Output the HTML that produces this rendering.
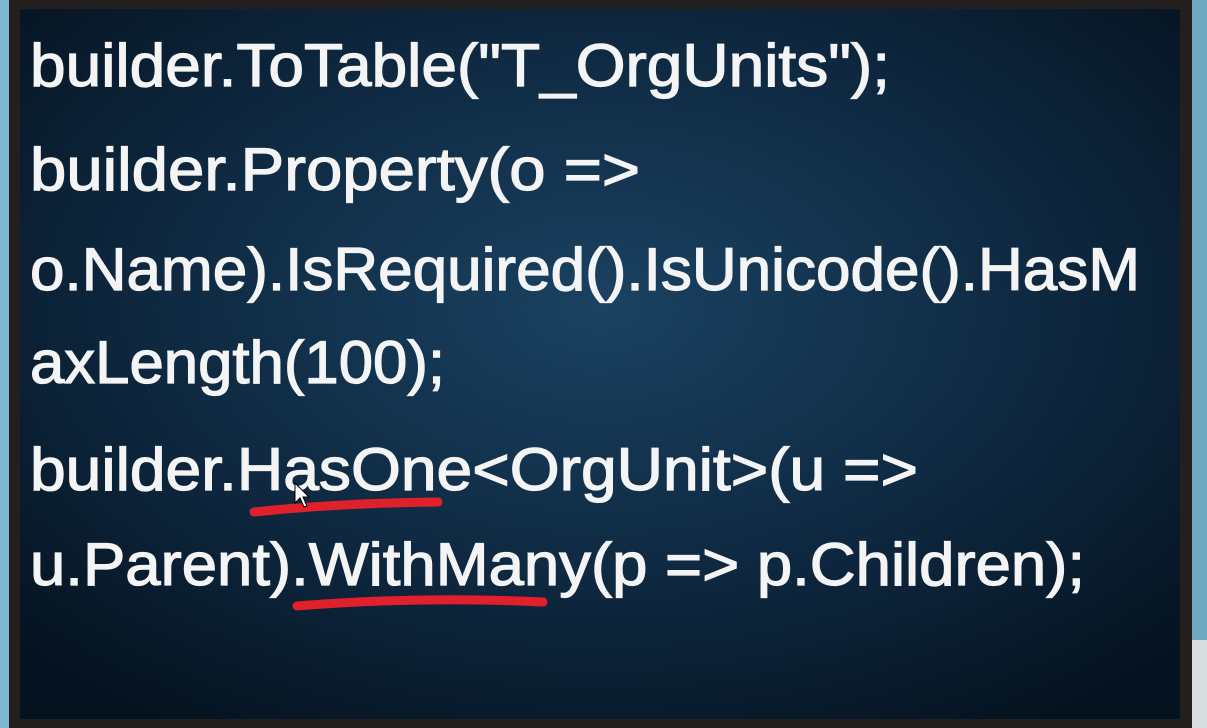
<!DOCTYPE html>
<html><head><style>
html,body{margin:0;padding:0;width:1207px;height:728px;overflow:hidden;background:#1a1a1a}
</style></head><body>
<svg width="1207" height="728" xmlns="http://www.w3.org/2000/svg">
<defs>
<radialGradient id="g" cx="0.5" cy="0.42" r="0.7">
<stop offset="0" stop-color="#1a4262"/>
<stop offset="0.6" stop-color="#0d263d"/>
<stop offset="1" stop-color="#05121f"/>
</radialGradient>
</defs>
<rect x="0" y="0" width="1207" height="728" fill="#1c1c1c"/>
<rect x="0" y="0" width="9" height="728" fill="#7fb8d0"/>
<rect x="1192" y="0" width="15" height="640" fill="#6fa9c0"/>
<rect x="1192" y="640" width="15" height="88" fill="#d8dde0"/>
<rect x="9" y="0" width="1183" height="728" fill="#231f1e"/>
<rect x="20" y="9" width="1160" height="710" fill="url(#g)"/>
<g fill="#f4f4f4" stroke="#f4f4f4" stroke-width="1.2" font-family="Liberation Sans, sans-serif" font-size="60">
<text x="30" y="86" textLength="860" lengthAdjust="spacingAndGlyphs">builder.ToTable("T_OrgUnits");</text>
<text x="30" y="190" textLength="610" lengthAdjust="spacingAndGlyphs">builder.Property(o =&gt;</text>
<text x="30" y="290" textLength="1110" lengthAdjust="spacingAndGlyphs">o.Name).IsRequired().IsUnicode().HasM</text>
<text x="30" y="383" textLength="415" lengthAdjust="spacingAndGlyphs">axLength(100);</text>
<text x="30" y="490" textLength="888" lengthAdjust="spacingAndGlyphs">builder.HasOne&lt;OrgUnit&gt;(u =&gt;</text>
<text x="30" y="585" textLength="1055" lengthAdjust="spacingAndGlyphs">u.Parent).WithMany(p =&gt; p.Children);</text>
</g>
<path d="M254 512 Q340 503 438 502" stroke="#e0202a" stroke-width="9" fill="none" stroke-linecap="round"/>
<path d="M297 606 Q420 596 543 602" stroke="#e0202a" stroke-width="9" fill="none" stroke-linecap="round"/>
<path d="M295 483 L295 503 L300 498 L304 507 L307 506 L303 497 L309 497 Z" fill="#fff" stroke="#000" stroke-width="1"/>
</svg>
</body></html>
